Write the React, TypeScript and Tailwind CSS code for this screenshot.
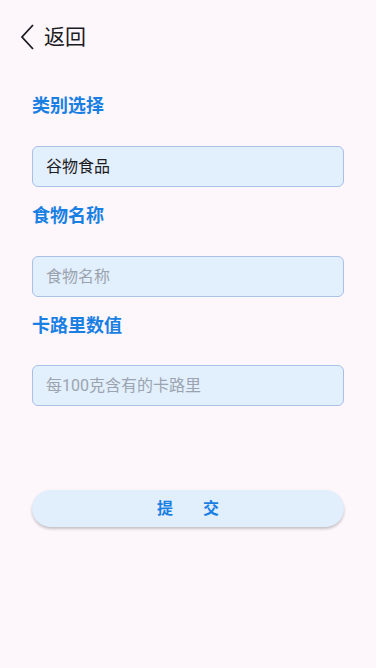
export default function App() {
  return (
    <div
      className="w-[376px] h-[668px] bg-[#fdf7fb] overflow-hidden"
      style={{ fontFamily: 'Roboto, "Noto Sans CJK SC", sans-serif' }}
    >
      {/* Header */}
      <div className="flex items-center h-[74px] pl-[18px]">
        <svg width="20" height="28" viewBox="0 0 20 28" className="text-[#1c1b1f]">
          <path d="M15 2 L4 14 L15 26" fill="none" stroke="currentColor" strokeWidth="1.8" />
        </svg>
        <span className="ml-[6px] text-[21px] leading-none text-[#1c1b1f]">返回</span>
      </div>

      <div className="px-8 flex flex-col">
        <div className="mt-[20px] h-[24px] leading-[24px] text-[18px] font-bold text-[#1a7fe3]">类别选择</div>
        <div className="mt-[28px] h-[41px] rounded-[6px] border border-[#a9c1e6] bg-[#e2effd] flex items-center px-[13px] text-[16px] text-[#1c1b1f]">
          谷物食品
        </div>

        <div className="mt-[17px] h-[24px] leading-[24px] text-[18px] font-bold text-[#1a7fe3]">食物名称</div>
        <input
          placeholder="食物名称"
          className="mt-[28px] h-[41px] rounded-[6px] border border-[#a9c1e6] bg-[#e2effd] px-[13px] text-[16px] text-[#1c1b1f] placeholder:text-[#9ba4ae] outline-none"
        />

        <div className="mt-[17px] h-[24px] leading-[24px] text-[18px] font-bold text-[#1a7fe3]">卡路里数值</div>
        <input
          placeholder="每100克含有的卡路里"
          className="mt-[27px] h-[41px] rounded-[6px] border border-[#a9c1e6] bg-[#e2effd] px-[13px] text-[16px] text-[#1c1b1f] placeholder:text-[#9ba4ae] outline-none"
        />

        <button className="mt-[84px] h-[37px] rounded-full bg-[#e1eefc] shadow-[0_2px_3px_rgba(0,0,0,0.22)] text-[16px] font-bold text-[#1a7fe3]">
          提<span className="inline-block w-[30px]" />交
        </button>
      </div>
    </div>
  );
}
